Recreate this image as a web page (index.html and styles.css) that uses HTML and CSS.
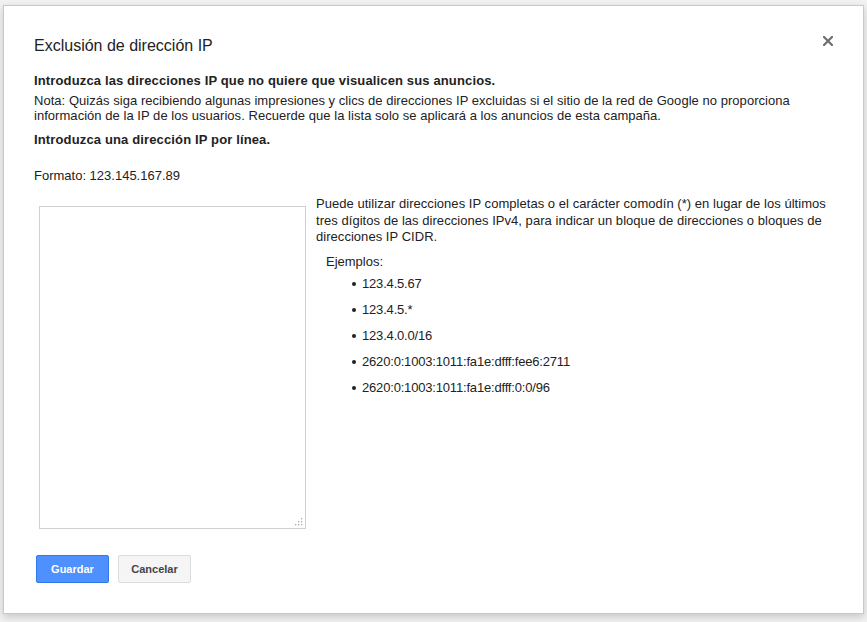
FILE: index.html
```html
<!DOCTYPE html>
<html lang="es">
<head>
<meta charset="utf-8">
<title>Exclusión de dirección IP</title>
<link rel="stylesheet" href="styles.css">
</head>
<body>
<div class="dialog">
  <button class="close" aria-label="Cerrar">
    <svg width="10" height="10" viewBox="0 0 10 10"><path d="M1 1L9 9M9 1L1 9" stroke="#6e6e6e" stroke-width="2.2" stroke-linecap="square"/></svg>
  </button>
  <h1 class="title">Exclusión de dirección IP</h1>
  <p class="lead">Introduzca las direcciones IP que no quiere que visualicen sus anuncios.</p>
  <p class="note">Nota: Quizás siga recibiendo algunas impresiones y clics de direcciones IP excluidas si el sitio de la red de Google no proporciona información de la IP de los usuarios. Recuerde que la lista solo se aplicará a los anuncios de esta campaña.</p>
  <p class="sub">Introduzca una dirección IP por línea.</p>
  <p class="format">Formato: 123.145.167.89</p>
  <div class="row">
    <div class="ta-wrap">
      <textarea class="ips"></textarea>
      <svg class="grip" width="9" height="9" viewBox="0 0 9 9" aria-hidden="true">
        <rect x="7" y="1" width="1.3" height="1.3" fill="#a8a8a8"/>
        <rect x="4" y="4" width="1.3" height="1.3" fill="#a8a8a8"/>
        <rect x="7" y="4" width="1.3" height="1.3" fill="#a8a8a8"/>
        <rect x="1" y="7" width="1.3" height="1.3" fill="#a8a8a8"/>
        <rect x="4" y="7" width="1.3" height="1.3" fill="#a8a8a8"/>
        <rect x="7" y="7" width="1.3" height="1.3" fill="#a8a8a8"/>
      </svg>
    </div>
    <div class="help">
      <p class="help-text">Puede utilizar direcciones IP completas o el carácter comodín (*) en lugar de los últimos tres dígitos de las direcciones IPv4, para indicar un bloque de direcciones o bloques de direcciones IP CIDR.</p>
      <p class="examples">Ejemplos:</p>
      <ul class="list">
        <li>123.4.5.67</li>
        <li>123.4.5.*</li>
        <li>123.4.0.0/16</li>
        <li>2620:0:1003:1011:fa1e:dfff:fee6:2711</li>
        <li>2620:0:1003:1011:fa1e:dfff:0:0/96</li>
      </ul>
    </div>
  </div>
  <div class="actions">
    <button class="btn btn-primary">Guardar</button>
    <button class="btn btn-default">Cancelar</button>
  </div>
</div>
</body>
</html>
```
FILE: styles.css
```css
html, body {
  margin: 0;
  padding: 0;
}
body {
  background: #f2f2f2;
  font-family: "Liberation Sans", Arial, sans-serif;
  font-size: 13px;
  color: #222;
  padding: 5px 0 0 3px;
  height: 622px;
  box-sizing: border-box;
  overflow: hidden;
}
.dialog {
  position: relative;
  box-sizing: border-box;
  width: 861px;
  height: 609px;
  background: #fff;
  border: 1px solid #c8c8c8;
  box-shadow: 0 3px 8px rgba(0, 0, 0, 0.18);
  padding: 30px 29px 0 30px;
}
.close {
  position: absolute;
  top: 30px;
  right: 30px;
  width: 10px;
  height: 10px;
  padding: 0;
  border: 0;
  background: none;
  line-height: 0;
}
.title {
  margin: 0;
  font-size: 16px;
  font-weight: normal;
  line-height: 20px;
  color: #222;
}
.lead, .sub {
  margin: 0;
  font-weight: bold;
  line-height: 16px;
  letter-spacing: 0.14px;
}
.lead {
  margin-top: 17px;
}
.note {
  margin: 4px 0 0;
  line-height: 15px;
  letter-spacing: 0.04px;
}
.sub {
  margin-top: 9px;
}
.format {
  margin: 20px 0 0;
  line-height: 16px;
}
.row {
  display: flex;
  align-items: flex-start;
  margin-top: 12px;
}
.ta-wrap {
  position: relative;
  flex: none;
  margin: 10px 0 0 5px;
  line-height: 0;
}
.ips {
  display: block;
  box-sizing: border-box;
  width: 267px;
  height: 323px;
  margin: 0;
  border: 1px solid #d0d0d0;
  background: #fff;
  padding: 2px;
  resize: none;
}
.grip {
  position: absolute;
  right: 3px;
  bottom: 3px;
}
.help {
  flex: 1;
  margin-left: 10px;
}
.help-text {
  margin: 0;
  line-height: 16.6px;
  letter-spacing: 0.04px;
}
.examples {
  margin: 8px 0 0 10px;
  line-height: 16px;
}
.list {
  list-style: none;
  margin: 6px 0 0;
  padding-left: 46px;
}
.list li {
  display: flex;
  align-items: center;
  line-height: 16px;
  margin-bottom: 10px;
  letter-spacing: -0.18px;
}
.list li::before {
  content: "";
  flex: none;
  width: 4px;
  height: 4px;
  border-radius: 50%;
  background: #222;
  margin: 1px 6px 0 -10px;
}
.actions {
  display: flex;
  gap: 9px;
  margin: 26px 0 0 2px;
}
.btn {
  box-sizing: border-box;
  width: 73px;
  height: 28px;
  border-radius: 2px;
  font-family: "Liberation Sans", Arial, sans-serif;
  font-size: 11px;
  font-weight: bold;
  padding: 0;
}
.btn-primary {
  background: #4d90fe;
  border: 1px solid #3079ed;
  color: #fff;
}
.btn-default {
  background: #f5f5f5;
  border: 1px solid #dcdcdc;
  color: #444;
}
```
